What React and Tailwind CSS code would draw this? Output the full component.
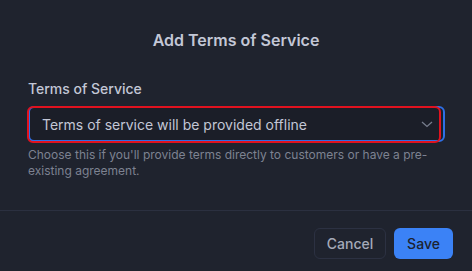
import React from "react";

export default function App() {
  return (
    <div
      className="w-[472px] h-[271px] bg-[#1f232e] flex flex-col overflow-hidden"
      style={{ fontFamily: "Inter, 'Noto Sans', sans-serif" }}
    >
      <div className="h-[211px] flex flex-col px-[28px] border-b border-[#2b3040]">
        <h2 className="pt-[30px] text-center text-[16px] leading-[20px] font-semibold text-[#c3c7d6]">
          Add Terms of Service
        </h2>
        <label className="mt-[30px] text-[14px] leading-[18px] font-medium text-[#c3c7d6]">
          Terms of Service
        </label>
        <div className="relative mt-[8px] h-[36px]">
          <div className="absolute left-0 top-0 w-[417px] h-[36px] rounded-[6px] border-2 border-[#2f6fe6] bg-[#1b1e28] flex items-center pl-[12px] pr-[10px]">
            <span className="text-[14px] text-[#c3c7d6] flex-1">
              Terms of service will be provided offline
            </span>
            <svg width="12" height="7" viewBox="0 0 12 7">
              <path d="M1 1 L6 5.5 L11 1" fill="none" stroke="#767c8c" strokeWidth="1.3" />
            </svg>
          </div>
          <div className="absolute left-[-1px] top-0 w-[414px] h-[37px] rounded-[6px] border-2 border-[#e0121f] pointer-events-none" />
        </div>
        <p className="mt-[5px] text-[12px] leading-[16px] text-[#7d8291]">
          Choose this if you'll provide terms directly to customers or have a pre-existing agreement.
        </p>
      </div>
      <div className="flex justify-end gap-[8px] pr-[19px] pt-[17px]">
        <button className="w-[72px] h-[31px] rounded-[6px] border border-[#2c3142] text-[14px] font-medium text-[#a5aab9]">
          Cancel
        </button>
        <button className="w-[59px] h-[31px] rounded-[6px] bg-[#3b82f6] text-[14px] font-medium text-[#1c2230]">
          Save
        </button>
      </div>
    </div>
  );
}
